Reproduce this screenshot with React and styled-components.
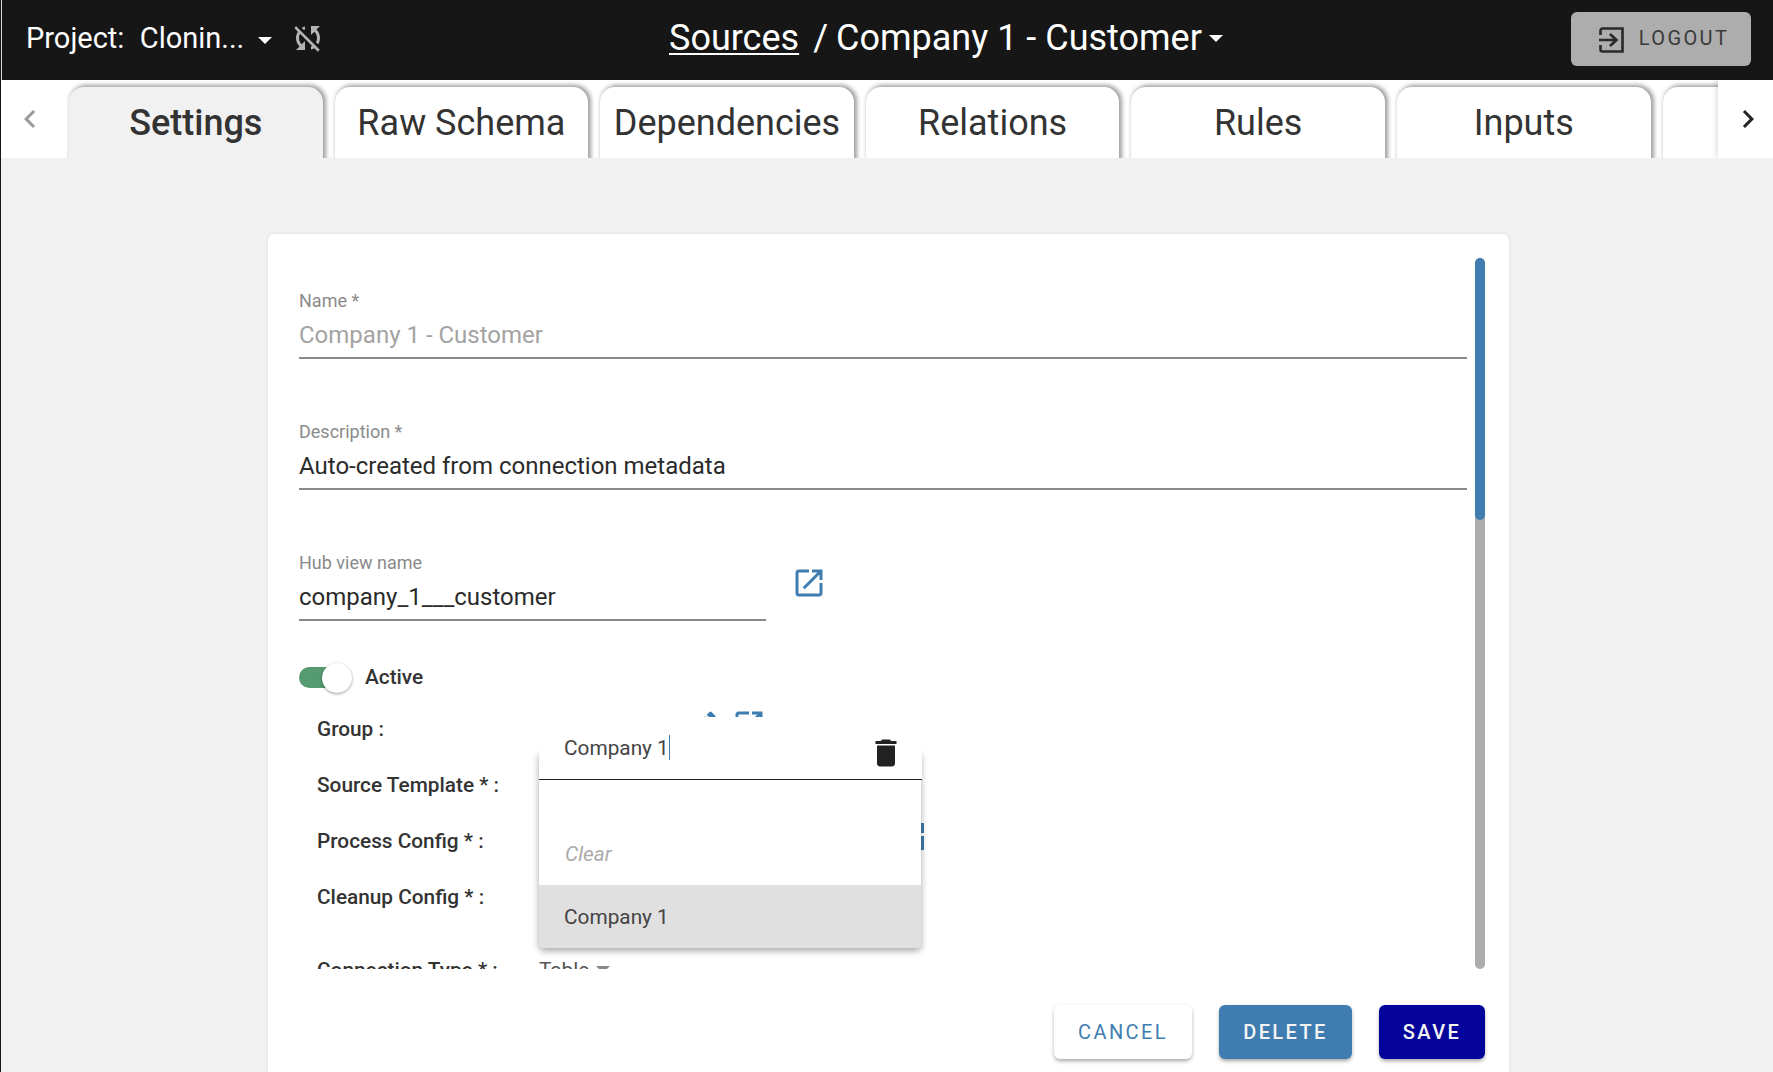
import React from "react";
import styled, { createGlobalStyle } from "styled-components";

const tabs = ["Settings", "Raw Schema", "Dependencies", "Relations", "Rules", "Inputs", ""];

const GlobalStyle = createGlobalStyle`
  html, body {
    margin: 0;
    height: 100%;
    overflow: hidden;
    font-family: Roboto, "Liberation Sans", sans-serif;
  }
  * {
    box-sizing: border-box;
  }
`;

function Icon({ d, size = 36, color = "currentColor", ...rest }) {
  return (
    <svg width={size} height={size} viewBox="0 0 24 24" fill={color} {...rest}>
      <path d={d} />
    </svg>
  );
}

const paths = {
  syncOff:
    "M10 6.35V4.26c-.8.21-1.55.54-2.23.96l1.46 1.46c.25-.12.5-.24.77-.33zm-7.14-.94l2.36 2.36C4.45 8.99 4 10.44 4 12c0 2.21.91 4.2 2.36 5.64L4 20h6v-6l-2.24 2.24C6.68 15.15 6 13.66 6 12c0-1 .25-1.94.68-2.77l8.08 8.08c-.25.13-.5.25-.77.34v2.09c.8-.21 1.55-.54 2.23-.96l2.36 2.36 1.27-1.27L4.14 4.14 2.86 5.41zM20 4h-6v6l2.24-2.24C17.32 8.85 18 10.34 18 12c0 1-.25 1.94-.68 2.77l1.46 1.46C19.55 15.01 20 13.56 20 12c0-2.21-.91-4.2-2.36-5.64L20 4z",
  left: "M15.41 16.59L10.83 12l4.58-4.59L14 6l-6 6 6 6 1.41-1.41z",
  right: "M8.59 16.59L13.17 12 8.59 7.41 10 6l6 6-6 6-1.41-1.41z",
  openNew:
    "M19 19H5V5h7V3H5c-1.11 0-2 .9-2 2v14c0 1.1.89 2 2 2h14c1.1 0 2-.9 2-2v-7h-2v7zM14 3v2h3.59l-9.83 9.83 1.41 1.41L19 6.41V10h2V3h-7z",
  edit: "M3 17.25V21h3.75L17.81 9.94l-3.75-3.75L3 17.25zM20.71 7.04c.39-.39.39-1.02 0-1.41l-2.34-2.34a.9959.9959 0 0 0-1.41 0l-1.83 1.83 3.75 3.75 1.83-1.83z",
  trash: "M6 19c0 1.1.9 2 2 2h8c1.1 0 2-.9 2-2V7H6v12zM19 4h-3.5l-1-1h-5l-1 1H5v2h14V4z",
};

function LogoutIcon() {
  return (
    <LogoutSvg width="28" height="28" viewBox="0 0 28 28" fill="none" stroke="#2a2a2a" strokeWidth="2.6">
      <path d="M2.5 9V4.5a2 2 0 0 1 2-2h20v23h-20a2 2 0 0 1-2-2V19" />
      <path d="M1 14h17M12 8l6.5 6-6.5 6" />
    </LogoutSvg>
  );
}

function App() {
  return (
    <Page>
      <GlobalStyle />
      <Header>
        <ProjectName>{"Project:  Clonin..."}</ProjectName>
        <Caret />
        <SyncIcon d={paths.syncOff} color="#b4b4b4" />
        <Breadcrumb>
          <SourcesLink>Sources</SourcesLink>
          <Slash>/</Slash>
          <span>Company 1 - Customer</span>
          <Caret $tight />
        </Breadcrumb>
        <LogoutButton>
          <LogoutIcon />
          LOGOUT
        </LogoutButton>
      </Header>

      <TabBar>
        <ScrollLeft>
          <Icon d={paths.left} color="#9a9a9a" />
        </ScrollLeft>
        <TabViewport>
          {tabs.map((tab, i) => (
            <Tab key={i} $active={i === 0}>
              {tab}
            </Tab>
          ))}
        </TabViewport>
        <ScrollRight>
          <Icon d={paths.right} color="#222" />
        </ScrollRight>
      </TabBar>

      <Main>
        <Card>
          <FormRow>
            <FormScroll>
              <Field>
                <FieldLabel>Name *</FieldLabel>
                <FieldValue $disabled>Company 1 - Customer</FieldValue>
              </Field>
              <Field>
                <FieldLabel>Description *</FieldLabel>
                <FieldValue>Auto-created from connection metadata</FieldValue>
              </Field>
              <HubRow>
                <Field $short>
                  <FieldLabel>Hub view name</FieldLabel>
                  <FieldValue>company_1___customer</FieldValue>
                </Field>
                <HubIcon d={paths.openNew} color="#3f7db0" />
              </HubRow>

              <SwitchRow>
                <SwitchTrack>
                  <SwitchThumb />
                </SwitchTrack>
                <SwitchLabel>Active</SwitchLabel>
              </SwitchRow>

              <ConfigRow>
                <ConfigLabel>Group :</ConfigLabel>
                <GroupIcons>
                  <Icon d={paths.edit} color="#3f7db0" />
                  <Icon d={paths.openNew} color="#3f7db0" />
                </GroupIcons>
              </ConfigRow>
              <ConfigRow>
                <ConfigLabel>Source Template * :</ConfigLabel>
              </ConfigRow>
              <ConfigRow>
                <ConfigLabel>Process Config * :</ConfigLabel>
                <EdgeIcon width="4" height="27" viewBox="0 0 4 27" fill="#3f7db0">
                  <rect width="4" height="10" />
                  <rect y="13" width="4" height="14" />
                </EdgeIcon>
              </ConfigRow>
              <ConfigRow>
                <ConfigLabel>Cleanup Config * :</ConfigLabel>
              </ConfigRow>
              <ConfigRow $gap>
                <ConfigLabel>Connection Type * :</ConfigLabel>
                <ConfigValue>Table</ConfigValue>
                <SelectCaret />
              </ConfigRow>
            </FormScroll>
            <ScrollTrack>
              <ScrollThumb />
            </ScrollTrack>
          </FormRow>

          <Footer>
            <ActionButton $variant="cancel">CANCEL</ActionButton>
            <ActionButton $variant="delete">DELETE</ActionButton>
            <ActionButton $variant="save">SAVE</ActionButton>
          </Footer>

          <Popover>
            <PopoverPaper />
            <PopoverHead>
              <PopoverInput>
                Company 1<TextCursor />
              </PopoverInput>
              <TrashIcon d={paths.trash} color="#222" />
            </PopoverHead>
            <PopoverList>
              <ClearOption>Clear</ClearOption>
              <GroupOption>Company 1</GroupOption>
            </PopoverList>
          </Popover>
        </Card>
      </Main>
    </Page>
  );
}

export default App;

const Page = styled.div`
  display: flex;
  flex-direction: column;
  height: 100vh;
  overflow: hidden;
  border-left: 1px solid #161616;
  background: #f1f1f1;
`;

const Header = styled.header`
  display: flex;
  align-items: center;
  flex: 0 0 80px;
  padding: 0 22px 0 24px;
  border-left: 1px solid #d8d8d8;
  background: #161616;
  color: #fff;
`;

const ProjectName = styled.div`
  width: 217px;
  font-size: 29px;
  word-spacing: 0.5px;
  white-space: pre;
  margin-top: -5px;
`;

const Caret = styled.span`
  width: 0;
  height: 0;
  margin-left: ${(p) => (p.$tight ? "7px" : "15px")};
  border-left: 7px solid transparent;
  border-right: 7px solid transparent;
  border-top: 7px solid #fff;
`;

const SyncIcon = styled(Icon)`
  margin-left: 18px;
  margin-top: -4px;
`;

const Breadcrumb = styled.div`
  display: flex;
  align-items: center;
  margin-left: 343px;
  font-size: 36px;
  margin-top: -4px;
  white-space: nowrap;
`;

const SourcesLink = styled.a`
  color: #fff;
  text-decoration: underline;
  text-underline-offset: 3px;
  text-decoration-thickness: 2px;
`;

const Slash = styled.span`
  margin: 0 8px 0 14px;
`;

const LogoutButton = styled.button`
  display: flex;
  align-items: center;
  justify-content: center;
  gap: 13px;
  width: 180px;
  height: 54px;
  margin: -3px 0 0 auto;
  padding: 0 0 2px 5px;
  border: 0;
  border-radius: 6px;
  background: #adadad;
  color: #3a3a3a;
  font-family: inherit;
  font-size: 20px;
  letter-spacing: 2.4px;
`;

const LogoutSvg = styled.svg`
  margin-top: 4px;
`;

const TabBar = styled.div`
  display: flex;
  flex: 0 0 78px;
  min-height: 0;
  overflow: hidden;
  background: #fff;
`;

const ScrollLeft = styled.div`
  display: flex;
  align-items: center;
  justify-content: center;
  flex: 0 0 58px;
`;

const ScrollRight = styled.div`
  position: relative;
  display: flex;
  align-items: center;
  justify-content: center;
  flex: 0 0 55px;
  padding-left: 5px;
  background: #fff;
  box-shadow: -2px 0 5px rgba(0, 0, 0, 0.12);
`;

const TabViewport = styled.div`
  display: flex;
  flex: 1;
  gap: 12px;
  min-width: 0;
  padding: 7px 0 0 10px;
  overflow: hidden;
`;

const Tab = styled.div`
  flex: 0 0 253.6px;
  height: 90px;
  padding-top: 15px;
  border-radius: 15px 15px 0 0;
  background: ${(p) => (p.$active ? "#f1f1f1" : "#fff")};
  box-shadow: 2px -1px 4px 1px rgba(0, 0, 0, 0.38);
  color: #333;
  font-size: 36px;
  font-weight: ${(p) => (p.$active ? 500 : 400)};
  line-height: 42px;
  text-align: center;
  white-space: nowrap;
`;

const Main = styled.main`
  flex: 1;
  min-height: 0;
  padding: 76px 0 0 267px;
`;

const Card = styled.section`
  position: relative;
  width: 1241px;
  height: 900px;
  padding: 24px 24px 0 31px;
  border-radius: 6px 6px 0 0;
  background: #fff;
  box-shadow: 0 0 3px rgba(0, 0, 0, 0.1);
`;

const FormRow = styled.div`
  display: flex;
  gap: 8px;
  height: 711px;
`;

const FormScroll = styled.div`
  flex: 1;
  min-width: 0;
  padding-top: 32px;
  overflow: hidden;
`;

const Field = styled.div`
  width: ${(p) => (p.$short ? "467px" : "auto")};
  margin-bottom: 62px;
`;

const FieldLabel = styled.div`
  color: #8a8a8a;
  font-size: 18px;
  line-height: 22px;
`;

const FieldValue = styled.div`
  height: 47px;
  border-bottom: 2px solid #8a8a8a;
  color: ${(p) => (p.$disabled ? "#a3a3a3" : "#2b2b2b")};
  font-size: 24px;
  line-height: 46px;
`;

const HubRow = styled.div`
  display: flex;
  align-items: flex-start;
`;

const HubIcon = styled(Icon)`
  margin: 13px 0 0 25px;
`;

const SwitchRow = styled.div`
  display: flex;
  align-items: center;
  height: 40px;
  margin-top: -26px;
  margin-bottom: 4px;
`;

const SwitchTrack = styled.div`
  position: relative;
  flex: 0 0 44px;
  height: 21px;
  border-radius: 11px;
  background: #569a72;
`;

const SwitchThumb = styled.div`
  position: absolute;
  top: -4px;
  left: 23px;
  width: 30px;
  height: 30px;
  border-radius: 50%;
  background: #fff;
  box-shadow: 0 1px 3px rgba(0, 0, 0, 0.4);
`;

const SwitchLabel = styled.div`
  margin-left: 22px;
  color: #333;
  font-size: 20.8px;
  font-weight: 500;
`;

const ConfigRow = styled.div`
  display: flex;
  align-items: flex-start;
  height: 56px;
  margin-top: ${(p) => (p.$gap ? "17px" : "0")};
  padding-left: 18px;
`;

const ConfigLabel = styled.div`
  flex: 0 0 222px;
  color: #333;
  font-size: 20.8px;
  font-weight: 500;
  line-height: 56px;
`;

const ConfigValue = styled.div`
  color: #555;
  font-size: 20.8px;
  line-height: 56px;
`;

const SelectCaret = styled.span`
  width: 0;
  height: 0;
  margin: 24px 0 0 7px;
  border-left: 7px solid transparent;
  border-right: 7px solid transparent;
  border-top: 7px solid #888;
`;

const GroupIcons = styled.div`
  display: flex;
  gap: 11px;
  margin: 6px 0 0 145px;
`;

const EdgeIcon = styled.svg`
  margin: 10px 0 0 381px;
`;

const ScrollTrack = styled.div`
  flex: 0 0 10px;
  border-radius: 5px;
  background: #adadad;
`;

const ScrollThumb = styled.div`
  height: 262px;
  border-radius: 5px;
  background: #3f7db0;
`;

const Footer = styled.div`
  display: flex;
  justify-content: flex-end;
  gap: 27px;
  margin-top: 36px;
`;

const buttonColors = {
  cancel: { bg: "#fff", fg: "#3f7db0", width: "138px" },
  delete: { bg: "#3f7db0", fg: "#f4f4f4", width: "133px" },
  save: { bg: "#05059b", fg: "#f4f4f4", width: "106px" },
};

const ActionButton = styled.button`
  width: ${(p) => buttonColors[p.$variant].width};
  height: 54px;
  border: 0;
  border-radius: 6px;
  background: ${(p) => buttonColors[p.$variant].bg};
  box-shadow: 0 3px 4px -1px rgba(0, 0, 0, 0.3), 0 1px 4px rgba(0, 0, 0, 0.12);
  color: ${(p) => buttonColors[p.$variant].fg};
  font-family: inherit;
  font-size: 20px;
  font-weight: ${(p) => (p.$variant === "cancel" ? 400 : 500)};
  letter-spacing: 2.4px;
`;

const Popover = styled.div`
  position: absolute;
  top: 483px;
  left: 271px;
  width: 383px;
  height: 231px;
`;

const PopoverPaper = styled.div`
  position: absolute;
  inset: 35px 1px 0 0;
  border-radius: 0 0 5px 5px;
  background: #fff;
  box-shadow: 0 3px 7px rgba(0, 0, 0, 0.35);
`;

const PopoverHead = styled.div`
  position: relative;
  display: flex;
  justify-content: space-between;
  height: 63px;
  padding: 17px 0 0 25px;
  border-bottom: 1.5px solid #222;
  background: #fff;
`;

const PopoverInput = styled.div`
  display: flex;
  height: 28px;
  color: #444;
  font-size: 20.8px;
  line-height: 28px;
`;

const TextCursor = styled.span`
  width: 1.5px;
  height: 25px;
  margin: 1px 0 0 0;
  background: #3f7db0;
`;

const TrashIcon = styled(Icon)`
  margin: 1px 18px 0 0;
`;

const PopoverList = styled.div`
  position: relative;
  padding: 42px 1px 0 0;
`;

const ClearOption = styled.div`
  height: 63px;
  padding-left: 26px;
  color: #aaa;
  font-size: 20.8px;
  font-style: italic;
  line-height: 65px;
`;

const GroupOption = styled.div`
  height: 63px;
  padding-left: 25px;
  border-radius: 0 0 5px 5px;
  background: #e0e0e0;
  color: #444;
  font-size: 20.8px;
  line-height: 65px;
`;
